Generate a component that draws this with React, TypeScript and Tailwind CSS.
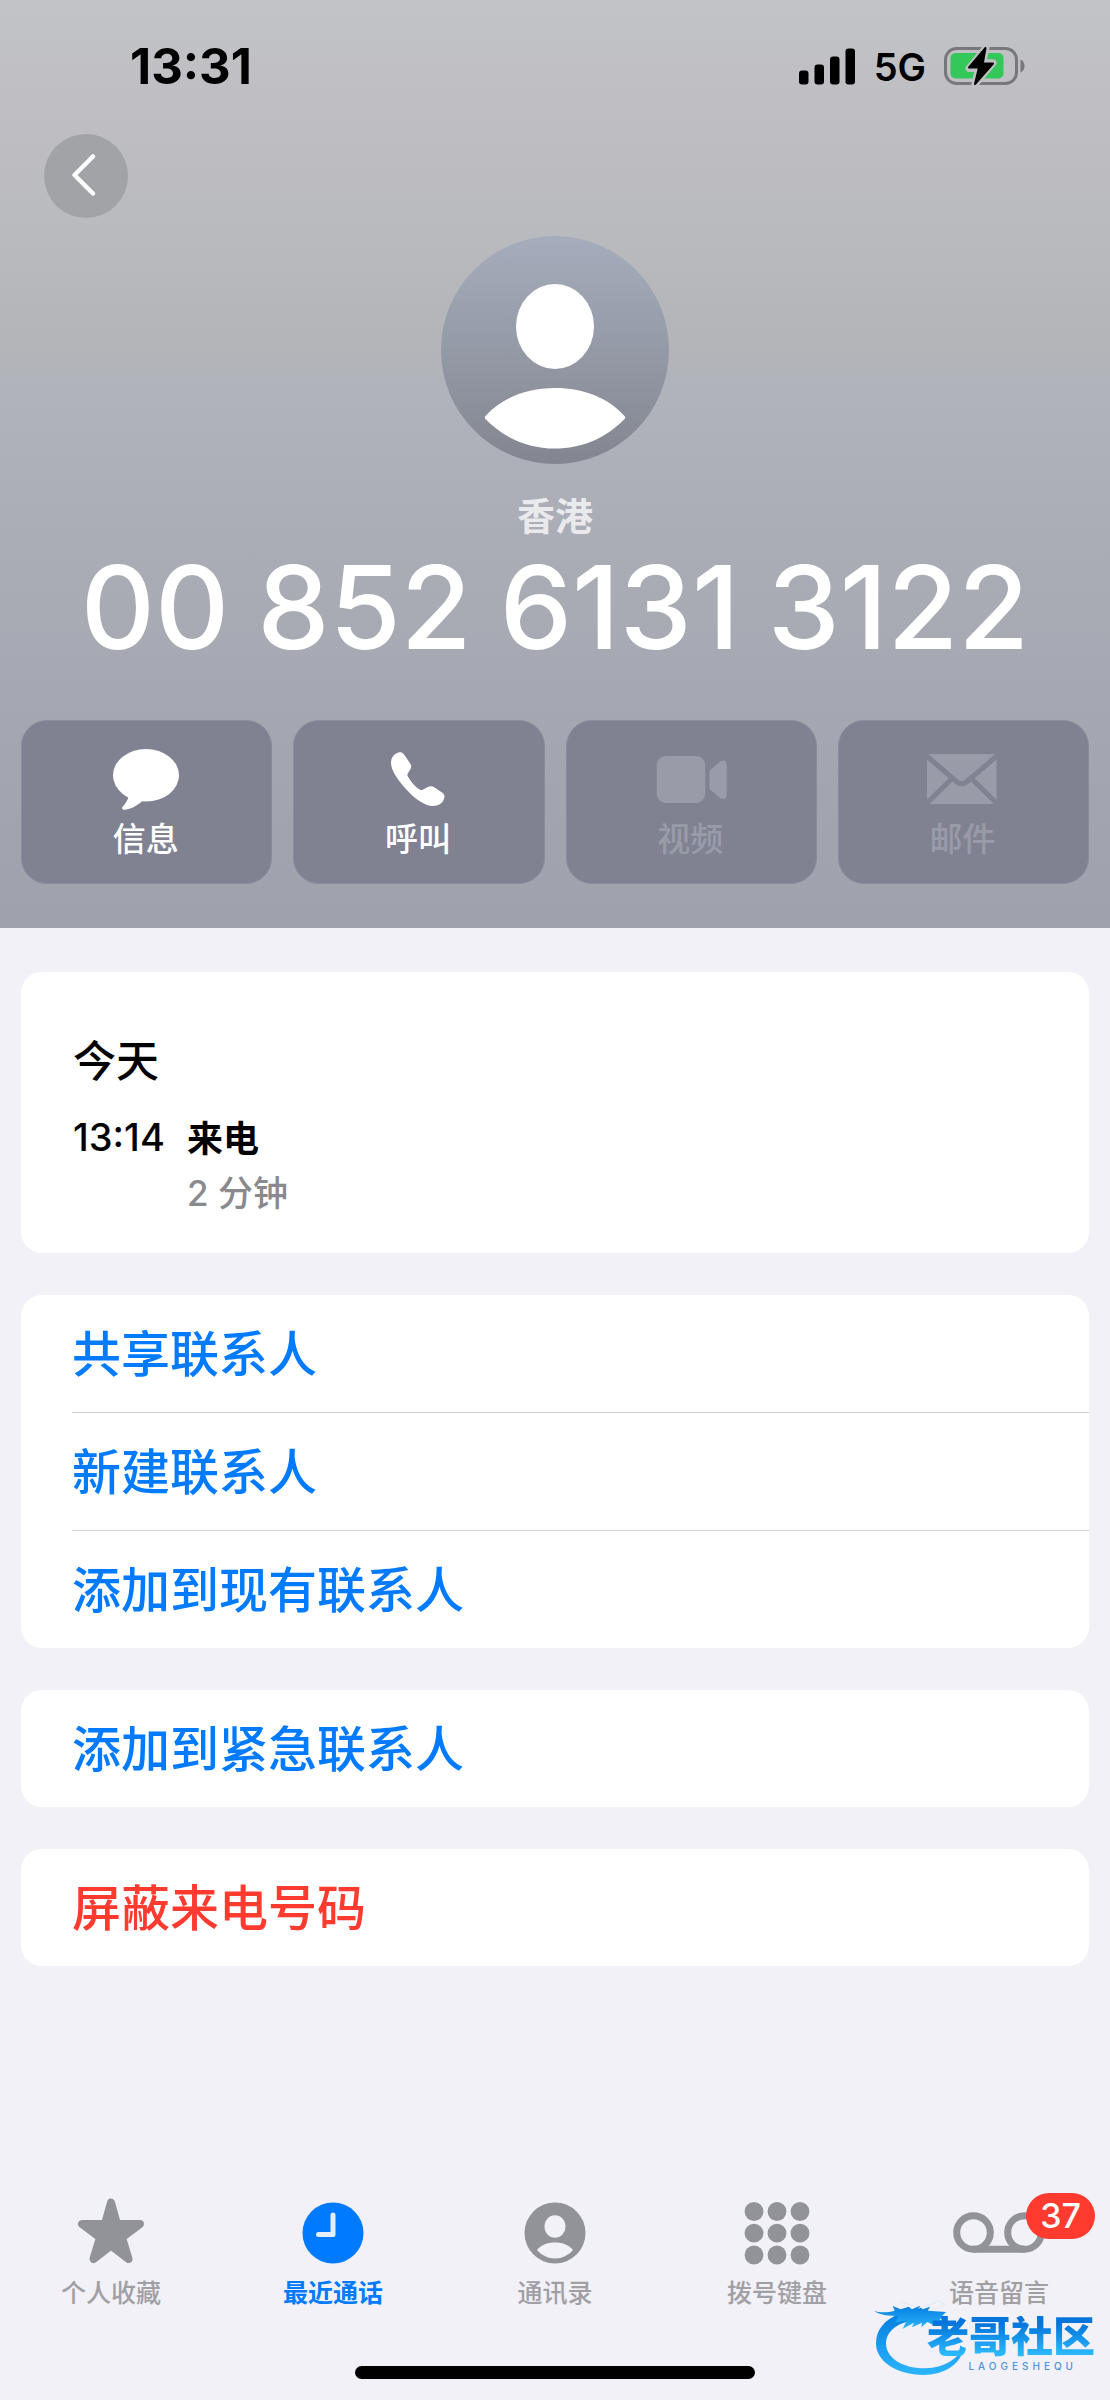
import type { ReactNode } from "react";

const cjk = "font-['Inter','Noto_Sans_CJK_SC',sans-serif]";

function StatusBar() {
  return (
    <div className="flex h-[132px] items-center justify-between pr-[84px] pl-[130px]">
      <time className="pt-[2px] text-[49px] leading-[60px] font-bold text-black">13:31</time>
      <div className="flex items-center">
        <svg width="57" height="37" viewBox="0 0 57 37" role="img" aria-label="信号">
          <rect x="0" y="22.5" width="9.5" height="14" rx="3" />
          <rect x="15.5" y="16.5" width="9.5" height="20" rx="3" />
          <rect x="31" y="8.5" width="9.5" height="28" rx="3" />
          <rect x="46.5" y="0.5" width="9.5" height="36" rx="3" />
        </svg>
        <span className="ml-[18px] pt-[2px] text-[38px] leading-[60px] font-semibold text-black">5G</span>
        <svg className="ml-[18px]" width="82" height="42" viewBox="0 0 82 42" role="img" aria-label="正在充电">
          <rect x="1.5" y="3.5" width="71" height="35" rx="11" fill="none" stroke="#78787c" strokeWidth="3" />
          <path d="M76.5 14.5C79 15.5 80.5 18 80.5 21C80.5 24 79 26.5 76.5 27.5Z" fill="#78787c" />
          <rect x="6.5" y="8" width="53" height="25.5" rx="5" fill="#34c759" />
          <path
            d="M42 2.5L25 23.5H34.5L30.8 39.5L49 17.8H38.8Z"
            fill="#bfc0c4"
            stroke="#bfc0c4"
            strokeWidth="7"
            strokeLinejoin="round"
          />
          <path d="M41.5 3L25 22.5H35L31 39L49 18.5H38.8Z" stroke="#000" strokeWidth="2" strokeLinejoin="round" />
        </svg>
      </div>
    </div>
  );
}

function Avatar() {
  return (
    <svg className="mt-[18px]" width="228" height="228" viewBox="0 0 228 228" role="img" aria-label="联系人头像">
      <defs>
        <linearGradient id="avatar" x1="0" y1="0" x2="0" y2="1">
          <stop offset="0" stopColor="#a5adbc" />
          <stop offset="1" stopColor="#838690" />
        </linearGradient>
      </defs>
      <circle cx="114" cy="114" r="114" fill="url(#avatar)" />
      <ellipse cx="114" cy="90.5" rx="39" ry="42.5" fill="#fff" />
      <path
        d="M44.5 180C43.5 181 43.5 182 44.5 183C63 202 87 212.5 114 212.5C141 212.5 165 202 183.5 183C184.5 182 184.5 181 183.5 180C167 161.5 142 152 114 152C86 152 61 161.5 44.5 180Z"
        fill="#fff"
      />
    </svg>
  );
}

function PhoneNumber({ groups }: { groups: string[] }) {
  return (
    <h1
      aria-label={groups.join(" ")}
      className="flex gap-7 text-[115px] leading-[132px] font-medium whitespace-nowrap text-white"
    >
      {groups.map((group) => (
        <span key={group}>{group}</span>
      ))}
    </h1>
  );
}

function ActionButton({ label, disabled, children }: { label: string; disabled?: boolean; children: ReactNode }) {
  return (
    <button
      type="button"
      disabled={disabled}
      className="flex h-[164px] flex-col items-center rounded-[26px] border border-[#8a8c9b] bg-[#808292] pt-7 pr-[2px] text-white disabled:text-[#999ba8]"
    >
      <svg width="76" height="62" viewBox="-2 0 76 62" fill="currentColor" aria-hidden="true">
        {children}
      </svg>
      <span className="mt-[6px] text-[33px] leading-[44px] font-medium">{label}</span>
    </button>
  );
}

function Card({ children, gap }: { children: ReactNode; gap?: string }) {
  return <section className={`overflow-hidden rounded-[21px] bg-white ${gap ?? "mt-[42px]"}`}>{children}</section>;
}

function Row({ label, danger, divider }: { label: string; danger?: boolean; divider?: boolean }) {
  return (
    <li className={`ml-[51px] ${divider ? "border-b border-[#d0d0d3]" : ""}`}>
      <button
        type="button"
        className={`flex h-[117px] w-full items-center pt-[2px] text-left text-[49px] leading-[60px] font-medium ${danger ? "text-[#ff3b30]" : "text-[#007aff]"}`}
      >
        {label}
      </button>
    </li>
  );
}

function Tab({
  label,
  active,
  badge,
  width = 68,
  children,
}: {
  label: string;
  active?: boolean;
  badge?: string;
  width?: number;
  children: ReactNode;
}) {
  return (
    <a
      href="#"
      aria-current={active ? "page" : undefined}
      className={`relative flex flex-col items-center ${active ? "text-[#007aff]" : "text-[#929398]"}`}
    >
      <svg width={width} height="68" viewBox={`0 0 ${width} 68`} fill="currentColor" aria-hidden="true">
        {children}
      </svg>
      <span className={`mt-[11px] text-[25px] leading-[32px] ${active ? "font-bold" : "font-medium text-[#a0a0a4]"}`}>
        {label}
      </span>
      {badge && (
        <span className="absolute -top-[5px] right-[15px] flex h-[46px] w-[69px] items-center justify-center rounded-full bg-[#ff3b30] text-[34px] leading-[46px] font-medium text-white">
          {badge}
        </span>
      )}
    </a>
  );
}

function Watermark() {
  return (
    <div className="absolute right-[15px] bottom-[22px] flex">
      <svg width="94" height="80" viewBox="30 350 282 240" aria-hidden="true">
        <defs>
          <linearGradient id="dragon" x1="0" y1="0" x2="0" y2="1">
            <stop offset="0" stopColor="#067fe0" />
            <stop offset="1" stopColor="#2bb5fb" />
          </linearGradient>
        </defs>
        <g fill="url(#dragon)">
          <path d="M112 398C68 414 42 446 42 486C42 542 106 580 184 581C248 581 300 546 303 500C286 532 248 560 190 561C122 562 72 530 72 486C72 454 100 430 140 420L170 398Z" />
          <path d="M36 388C54 394 76 394 98 388L92 374L116 384L140 376L150 384L172 374L182 384L204 376L198 388L252 392L240 404L252 406L232 414L248 424L222 420L242 430L212 430L196 422L178 438L180 424L150 438L156 424L122 442L134 418L100 422L110 404C84 402 58 404 36 388Z" />
        </g>
        <path
          d="M120 364L156 374M170 380L222 364M200 386C226 384 244 378 250 370M226 358L244 366"
          fill="none"
          stroke="#dcebf8"
          strokeWidth="3"
          strokeLinecap="round"
        />
      </svg>
      <div className="-ml-[39px] flex flex-col items-end pt-[18px]">
        <span className="bg-linear-to-b from-[#0675db] from-20% to-[#2bb8fc] to-90% bg-clip-text text-[42px] leading-[42px] font-black text-transparent">
          老哥社区
        </span>
        <span className="mt-[3px] mr-[18px] text-[10px] leading-[10px] font-medium tracking-[4px] text-[#4a93dc]">
          LAOGESHEQU
        </span>
      </div>
    </div>
  );
}

export default function App() {
  return (
    <div className={`relative flex min-h-screen flex-col bg-[#f2f1f7] ${cjk}`} lang="zh-CN">
      <header className="flex flex-col bg-[linear-gradient(to_bottom,#c2c3c7_0%,#bebec2_14%,#b9babe_26%,#b4b5b8_36%,#b0b3bc_43%,#abadb6_58%,#a4a6b1_78%,#9fa1ad_100%)] pb-11">
        <StatusBar />
        <button
          type="button"
          aria-label="返回"
          className="mt-[2px] ml-11 flex h-[84px] w-[84px] items-center justify-center rounded-full bg-[#a2a3a7]"
        >
          <svg width="42" height="46" viewBox="0 0 42 46" fill="none" stroke="#fff" strokeWidth="4.5" strokeLinecap="round" strokeLinejoin="round">
            <path d="M28 3.5L9.5 22L28 40.5" />
          </svg>
        </button>
        <div className="flex flex-col items-center">
          <Avatar />
          <p className="mt-[26px] text-[38px] leading-[52px] font-bold text-white/75">香港</p>
          <PhoneNumber groups={["00", "852", "6131", "3122"]} />
        </div>
        <div className="mt-[46px] grid grid-cols-4 gap-[21px] px-[21px]">
          <ActionButton label="信息">
            <ellipse cx="36" cy="26.3" rx="33" ry="26.3" />
            <path d="M19 46C18 51 15.5 54.5 12.8 57.5C11.2 59.5 12.5 61 15 60.7C22 60 28 56 32 52.3L36 48Z" />
          </ActionButton>
          <ActionButton label="呼叫">
            <path d="M18.2 3.2C20 3 21 4 22 5.5L28.5 15C29.6 17 29.3 18.5 28.5 20L25.8 24.5C25.2 25.7 25.3 26.5 26 27.8C29 33 33 37.5 37.5 40.5C39 41.3 40 41.3 41.2 40.5L45.8 38C48.2 36.8 50.3 37 52.3 38.3L60.3 43.8C62.3 45.2 62.8 46.8 62.3 49C61 54.3 56.5 57 51 57C43 57 32 49.5 23.5 39.5C15 30 9 20.5 9 14C9 8 13 3.5 18.2 3.2Z" />
          </ActionButton>
          <ActionButton label="视频" disabled>
            <rect x="2.7" y="7" width="48.5" height="47" rx="9" />
            <path d="M55.5 23.5C55.5 22 55.8 21.3 57 20.2L65.8 12.8C68.8 10.5 72.7 11.5 72.7 15.5V46C72.7 50 68.8 51 65.8 48.7L57 41.3C55.8 40.2 55.5 39.5 55.5 38Z" />
          </ActionButton>
          <ActionButton label="邮件" disabled>
            <rect x="1" y="5" width="69.5" height="50" rx="4" />
            <path
              d="M-1 5.5L30.5 32.5Q35.7 37 41 32.5L72.5 5.5M-1 56L26 29.5M72.5 56L45.5 29.5"
              fill="none"
              stroke="#808292"
              strokeWidth="5"
            />
          </ActionButton>
        </div>
      </header>

      <main className="px-[21px]">
        <Card gap="mt-11">
          <div className="pt-[59px] pr-[52px] pb-[35px] pl-[52px]">
            <h2 className="text-[43px] leading-[60px] font-medium text-black">今天</h2>
            <div className="mt-[21px] grid grid-cols-[94px_1fr] gap-x-5 leading-[50px]">
              <time className="text-[38px] leading-[50px] font-medium text-black">13:14</time>
              <div>
                <p className="pt-[2px] text-[36px] leading-[50px] font-bold text-black">来电</p>
                <p className="mt-1 text-[35px] leading-[50px] font-medium text-[#8a8a8e]">2 分钟</p>
              </div>
            </div>
          </div>
        </Card>
        <Card>
          <ul>
            <Row label="共享联系人" divider />
            <Row label="新建联系人" divider />
            <Row label="添加到现有联系人" />
          </ul>
        </Card>
        <Card>
          <ul>
            <Row label="添加到紧急联系人" />
          </ul>
        </Card>
        <Card>
          <ul>
            <Row label="屏蔽来电号码" danger />
          </ul>
        </Card>
      </main>

      <footer className="mt-auto flex flex-col items-center pt-10 pb-[21px]">
        <nav className="grid w-full grid-cols-5">
          <Tab label="个人收藏">
            <path
              d="M34 4.5L40 26H63L45 39.5L51.5 61L34 47.5L16.5 61L23 39.5L5 26H28Z"
              stroke="currentColor"
              strokeWidth="8"
              strokeLinejoin="round"
            />
          </Tab>
          <Tab label="最近通话" active>
            <circle cx="34" cy="35" r="30.5" />
            <path d="M34 17V36.5H19.5" fill="none" stroke="#e4effb" strokeWidth="5" strokeLinecap="round" strokeLinejoin="round" />
          </Tab>
          <Tab label="通讯录">
            <circle cx="34" cy="35" r="30.5" />
            <ellipse cx="34" cy="28.5" rx="10.5" ry="11.3" fill="#f2f1f7" />
            <path d="M16 52C20 47 26 44.5 34 44.5C42 44.5 48 47 52 52C47 57.5 41 60.5 34 60.5C27 60.5 21 57.5 16 52Z" fill="#f2f1f7" />
          </Tab>
          <Tab label="拨号键盘">
            {[13.5, 35.2, 57].map((cy) =>
              [11, 34, 57].map((cx) => <circle key={`${cx}-${cy}`} cx={cx} cy={cy} r="9.4" />),
            )}
          </Tab>
          <Tab label="语音留言" badge="37" width={92}>
            <g fill="none" stroke="currentColor" strokeWidth="7">
              <circle cx="20.5" cy="34.5" r="16.8" />
              <circle cx="71.5" cy="34.5" r="16.8" />
              <path d="M20 51.3H72" />
            </g>
          </Tab>
        </nav>
        <div className="mt-[57px] h-[13px] w-[36%] rounded-full bg-black" />
      </footer>
      <Watermark />
    </div>
  );
}
